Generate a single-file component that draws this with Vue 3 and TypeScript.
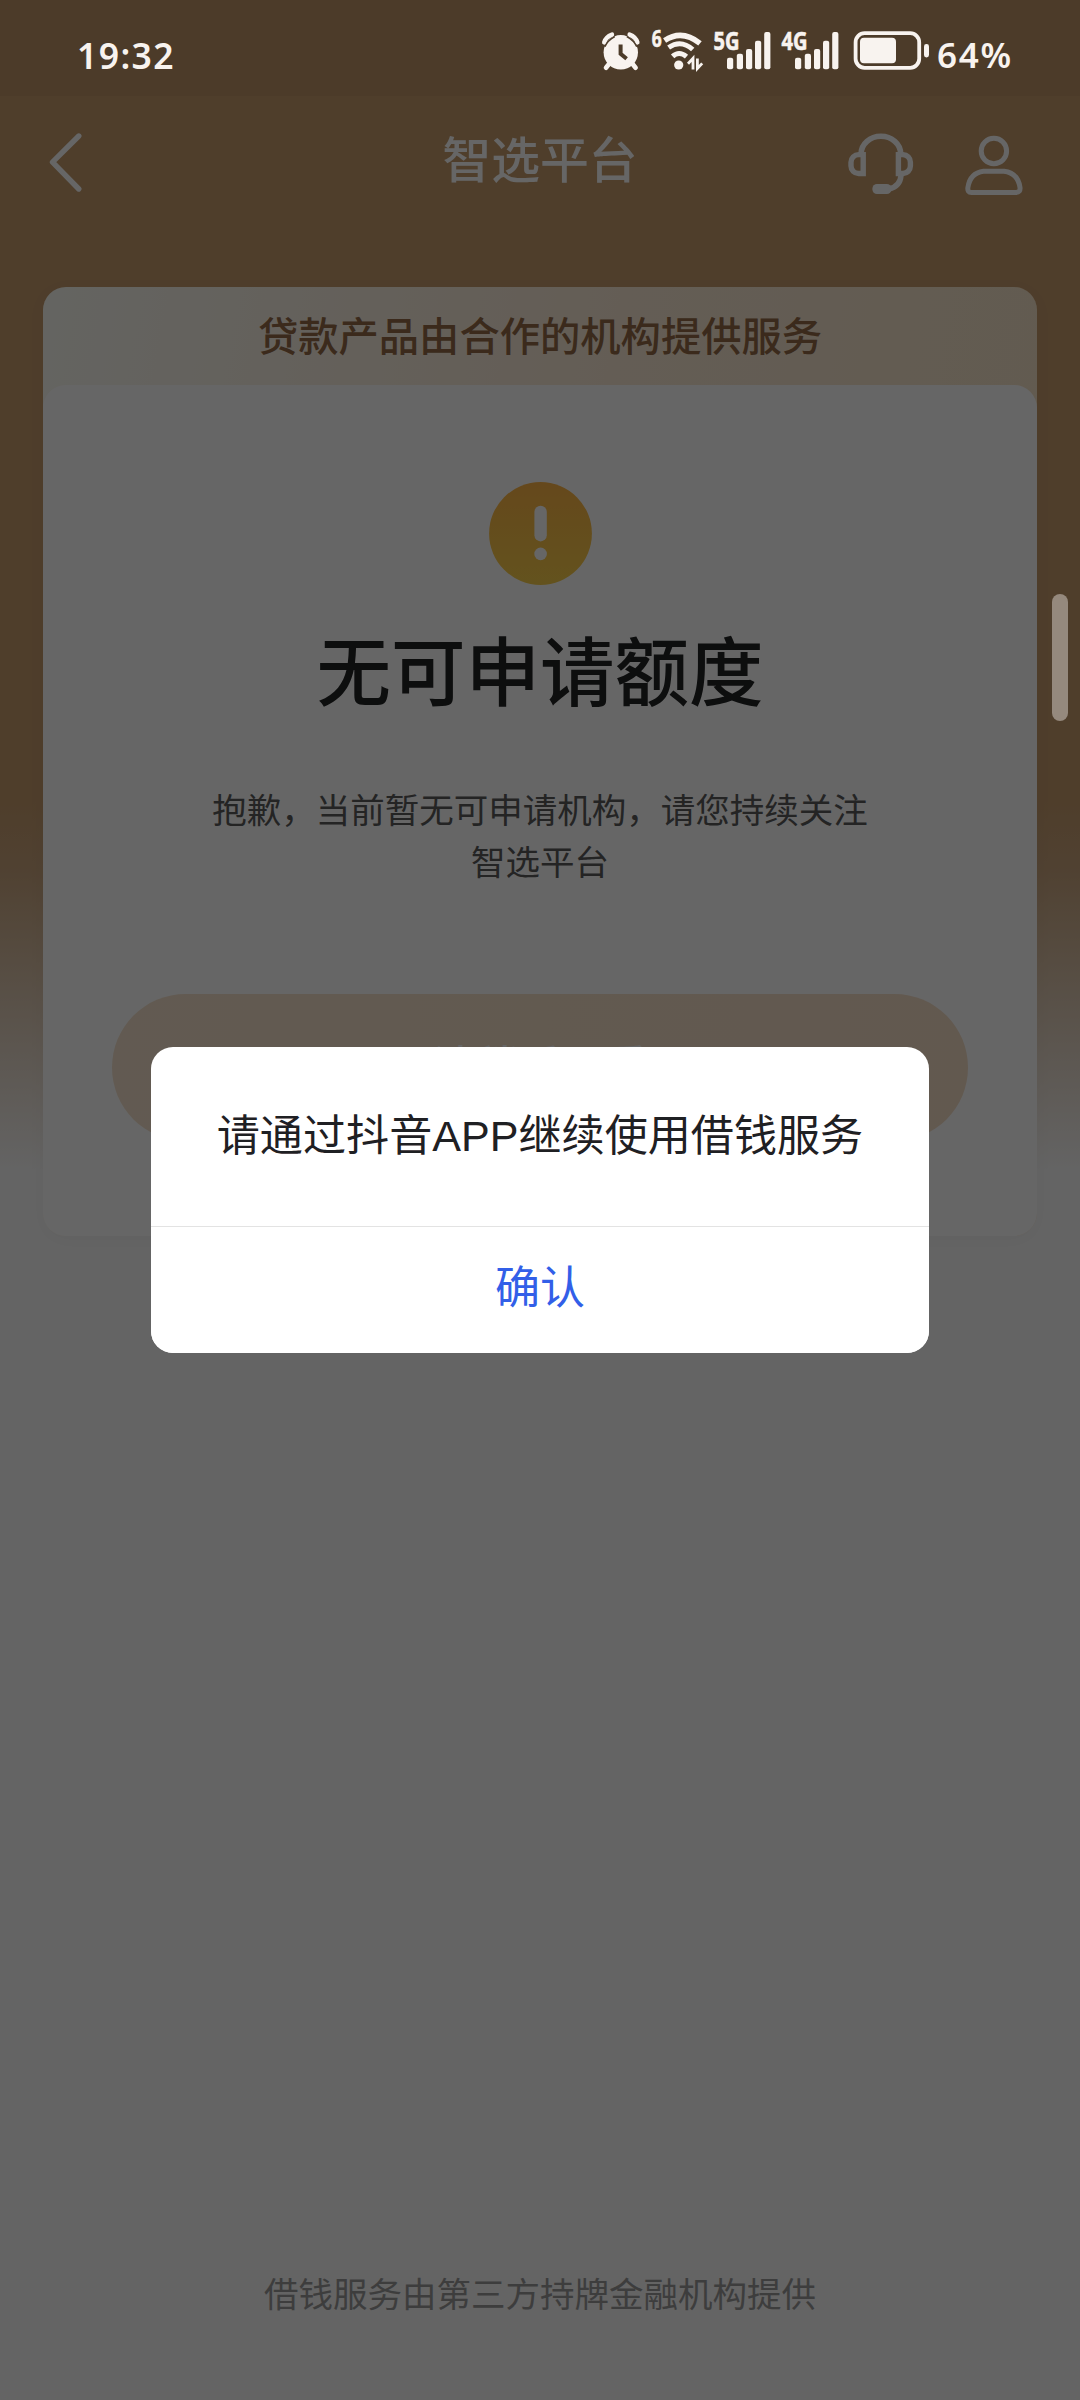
<script setup lang="ts">
interface Bar { x: number; y: number }

const signalBars: Bar[] = [
  { x: 13, y: 27.7 },
  { x: 22.8, y: 23.7 },
  { x: 32, y: 19 },
  { x: 41, y: 10.7 },
  { x: 50.2, y: 2 },
]
const networks: string[] = ['5G', '4G']
const descLines: string[] = ['抱歉，当前暂无可申请机构，请您持续关注', '智选平台']
</script>

<template>
  <div class="screen">
    <header class="status">
      <span class="time">19:32</span>
      <div class="status-icons">
        <svg class="alarm" width="40" height="40" viewBox="0 0 40 40">
          <circle cx="20.8" cy="22.3" r="17.2" fill="#f8f3ef" />
          <path d="M4.2 12.4Q5.8 7 12 4.6M29.6 4.6Q35.8 7 37.4 12.4" fill="none" stroke="#f8f3ef" stroke-width="4.4" stroke-linecap="round" />
          <path d="M4.8 16.8Q7.6 10.4 14.8 6.6M26.8 6.6Q34 10.4 36.8 16.8" fill="none" stroke="#4c3b29" stroke-width="1.6" />
          <path d="M9 34l-3 3.8M32.6 34l3 3.8" stroke="#f8f3ef" stroke-width="4.6" stroke-linecap="round" />
          <path d="M20.6 14.6v9.2l6 5" fill="none" stroke="#4c3b29" stroke-width="4" />
        </svg>
        <svg class="wifi" width="56" height="44" viewBox="0 0 56 44">
          <text x="1.8" y="17" font-size="23" font-weight="700" textLength="10" lengthAdjust="spacingAndGlyphs">6</text>
          <g fill="none" stroke="#f8f3ef" stroke-width="5">
            <path d="M14.6 10.5Q32 -1 50 13.4" stroke-width="5.5" />
            <path d="M18.6 17.5Q31 9 42.7 19.5" />
            <path d="M22.6 26.4Q29 20.5 36.5 26.6" />
          </g>
          <circle cx="28.7" cy="35" r="4.6" fill="#f8f3ef" />
          <path d="M38 33.8L43 28.4V39.5M47.4 28.4V38.5L52.2 33.4" fill="none" stroke="#f8f3ef" stroke-width="2.8" />
        </svg>
        <svg v-for="net in networks" :key="net" class="signal" width="58" height="40" viewBox="0 0 58 40">
          <text x="-.4" y="20" font-size="24.5" font-weight="700" textLength="26" lengthAdjust="spacingAndGlyphs">{{ net }}</text>
          <rect v-for="bar in signalBars" :key="bar.x" :x="bar.x" :y="bar.y" width="6.2" :height="39.3 - bar.y" rx="2" fill="#f8f3ef" />
        </svg>
        <svg class="battery" width="77" height="40" viewBox="0 0 77 40">
          <rect x="2.6" y="3.2" width="63.6" height="34.6" rx="9" fill="none" stroke="#f8f3ef" stroke-width="3.8" />
          <rect x="7" y="7.8" width="36" height="25.4" rx="4" fill="#f8f3ef" />
          <rect x="71" y="14" width="5" height="13.4" rx="2.4" fill="#f8f3ef" />
        </svg>
      </div>
      <span class="percent">64%</span>
    </header>

    <nav class="nav">
      <svg class="back" width="40" height="64" viewBox="0 0 40 64">
        <path d="M33.8 6L7.5 32.2L33.8 59" fill="none" stroke="#fff" stroke-width="5.4" stroke-linecap="round" stroke-linejoin="round" />
      </svg>
      <h1 class="nav-title">智选平台</h1>
      <div class="nav-actions">
        <svg width="66" height="64" viewBox="0 0 66 64" fill="none" stroke="#fff" stroke-width="5">
          <path d="M13.2 22.5V21.6A19.6 17.2 0 0 1 52.6 21.6V22.5" stroke-width="5.6" />
          <path d="M15.2 22.6H10.6A7.6 7.6 0 0 0 3 30.2V34A7.6 7.6 0 0 0 10.6 41.5H15.2Z" stroke-width="5.4" />
          <path d="M50.4 22.6H55A7.6 7.6 0 0 1 62.4 30.2V34A7.6 7.6 0 0 1 55 41.5H50.4Z" stroke-width="5.4" />
          <path d="M53 43.5Q52.2 54.4 41 57" stroke-width="5.4" />
          <rect x="24.4" y="52" width="19" height="10" rx="4.6" fill="#fff" stroke="none" />
        </svg>
        <svg width="58" height="64" viewBox="0 0 58 64" fill="none" stroke="#fff" stroke-width="5">
          <circle cx="28.9" cy="19" r="12.7" />
          <path d="M18.5 39.2H39Q53 41 55 55.5Q55.6 60.4 51 60.4H6.5Q2.2 60.4 2.9 55.5Q5 41 18.5 39.2Z" />
        </svg>
      </div>
    </nav>

    <main class="product">
      <p class="banner">贷款产品由合作的机构提供服务</p>
      <section class="card">
        <svg class="warn" width="103" height="103" viewBox="0 0 103 103">
          <defs>
            <linearGradient id="gold" x1="0" y1="0" x2="0" y2="1">
              <stop offset="0" stop-color="#fdb446" />
              <stop offset="1" stop-color="#f8ce4b" />
            </linearGradient>
          </defs>
          <circle cx="51.5" cy="51.5" r="51.4" fill="url(#gold)" />
          <rect x="45.4" y="23.8" width="12.4" height="35.6" rx="6.2" fill="#fff" />
          <circle cx="51.6" cy="71.9" r="6.3" fill="#fff" />
        </svg>
        <h2 class="card-title">无可申请额度</h2>
        <p class="desc"><span v-for="line in descLines" :key="line">{{ line }}</span></p>
        <button class="action" type="button">请稍后再看</button>
      </section>
    </main>

    <footer class="footnote">借钱服务由第三方持牌金融机构提供</footer>

    <div class="mask">
      <div class="dialog" role="dialog">
        <p class="message">请通过抖音<span class="latin">APP</span>继续使用借钱服务</p>
        <button class="confirm" type="button">确认</button>
      </div>
    </div>
    <i class="handle"></i>
  </div>
</template>

<style>
body { margin: 0; }
</style>

<style scoped>
.screen {
  position: relative;
  display: flex;
  flex-direction: column;
  width: 1080px;
  height: 2400px;
  overflow: hidden;
  box-sizing: border-box;
  background: linear-gradient(180deg, #c59b6c 0, #c59b6c 800px, #c8a47d 870px, #fafafa 1170px, #fafafa 100%);
  font-family: "Noto Sans CJK SC", "Noto Sans", sans-serif;
}
h1, h2, p { margin: 0; font-weight: 400; }
button { border: 0; padding: 0; font-family: inherit; }

.status {
  position: relative;
  z-index: 3;
  display: flex;
  align-items: flex-start;
  flex: none;
  height: 96px;
  background: #4c3b29;
  color: #f8f3ef;
  font-family: "Noto Sans", sans-serif;
}
.status svg { display: block; overflow: visible; }
.status text { fill: #f8f3ef; stroke: #f8f3ef; stroke-width: .6px; font-family: "Noto Sans", sans-serif; }
.time, .percent {
  font-size: 35.5px;
  font-weight: 600;
  line-height: 50px;
  margin-top: 30px;
  white-space: nowrap;
}
.time { width: 522px; padding-left: 77px; margin-right: 1px; letter-spacing: 1.4px; }
.status-icons { display: flex; margin-top: 30px; }
.wifi { margin-left: 10px; }
.signal { margin-left: 8px; }
.signal + .signal { margin-left: 10.3px; }
.battery { margin-left: 12.7px; }
.percent { margin-left: 7px; letter-spacing: 1.7px; font-size: 35px; }

.nav {
  display: flex;
  align-items: center;
  flex: none;
  height: 122px;
  padding: 0 57px 0 45px;
  box-sizing: border-box;
}
.nav svg { display: block; flex: none; }
.back { margin-top: 10px; }
.nav-title {
  width: 200px;
  margin-left: 355px;
  flex: none;
  text-align: center;
  font-size: 48.8px;
  line-height: 72px;
  font-weight: 500;
  color: #fff;
}
.nav-actions { display: flex; gap: 51px; margin-top: 13px; margin-left: auto; }

.product {
  margin: 69px 43px 0;
  height: 949px;
  flex: none;
  border-radius: 23px;
  background: linear-gradient(100deg, #fbfaf3 0, #fbf1e3 25%, #f9e9d5 50%, #f5e2c5 100%);
  box-shadow: 0 4px 20px rgba(0, 0, 0, .03);
}
.banner {
  height: 98px;
  line-height: 93px;
  text-align: center;
  font-size: 40.3px;
  font-weight: 500;
  color: #936a46;
}
.card {
  display: flex;
  flex-direction: column;
  align-items: center;
  height: 851px;
  padding-top: 97px;
  box-sizing: border-box;
  border-radius: 23px;
  background: #fff;
}
.warn { display: block; }
.card-title {
  margin-top: 31px;
  font-size: 74.5px;
  line-height: 104px;
  font-weight: 500;
  color: #222324;
}
.desc {
  display: flex;
  flex-direction: column;
  align-items: center;
  margin-top: 62px;
  font-size: 34.5px;
  line-height: 52px;
  color: #5a5a5a;
}
.action {
  width: 856px;
  height: 147px;
  margin-top: 108px;
  padding-bottom: 10px;
  box-sizing: border-box;
  border-radius: 74px;
  background: linear-gradient(90deg, #f5e2cc, #f5dec6);
  color: #fff;
  font-size: 43.1px;
  font-weight: 500;
}
.footnote {
  margin-top: auto;
  padding-bottom: 81px;
  text-align: center;
  font-size: 34.5px;
  line-height: 54px;
  color: #999;
}

.mask {
  position: absolute;
  inset: 0;
  z-index: 2;
  display: flex;
  align-items: center;
  justify-content: center;
  background: rgba(0, 0, 0, .6);
}
.dialog {
  display: flex;
  flex-direction: column;
  width: 778px;
  height: 306px;
  border-radius: 22px;
  background: #fff;
  overflow: hidden;
}
.message {
  height: 179px;
  line-height: 171px;
  text-align: center;
  font-size: 43.1px;
  color: #1f2023;
  white-space: nowrap;
}
.latin { font-family: "Liberation Sans", sans-serif; }
.confirm {
  flex: 1;
  padding-bottom: 10px;
  border-top: 1px solid #e3e3e3;
  background: #fff;
  font-size: 45px;
  line-height: 60px;
  color: #325fe8;
}
.handle {
  position: absolute;
  z-index: 4;
  right: 12px;
  top: 594px;
  width: 16px;
  height: 127px;
  border-radius: 8px;
  background: #95897d;
}
</style>
